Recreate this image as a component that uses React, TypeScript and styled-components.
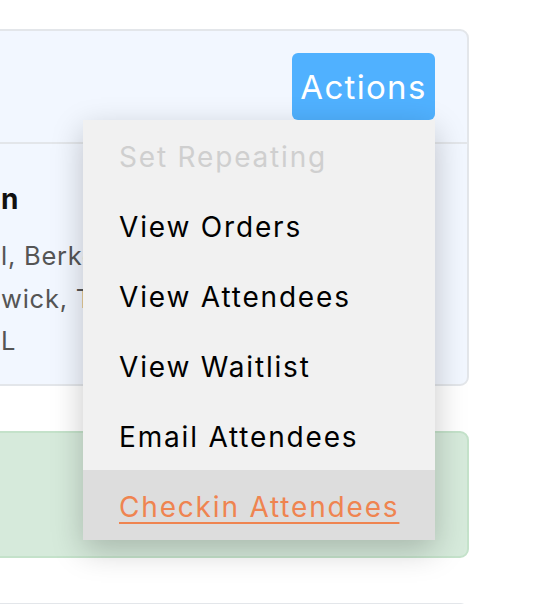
import React from "react";
import styled, { createGlobalStyle } from "styled-components";

const Global = createGlobalStyle`
  html, body { margin: 0; padding: 0; background: #ffffff; overflow: hidden; }
  body { font-family: Inter, "Noto Sans", sans-serif; width: 542px; height: 604px; }
`;

const Viewport = styled.div`
  width: 542px;
  height: 604px;
  overflow: hidden;
`;

const Page = styled.div`
  width: 509px;
  margin-left: -40px;
  padding-top: 29px;
  display: flex;
  flex-direction: column;
  gap: 45px;
`;

const Card = styled.section`
  background: #f2f7ff;
  border: 2px solid #e3e6ea;
  border-radius: 9px;
  display: flex;
  flex-direction: column;
`;

const CardHeader = styled.div`
  height: 113px;
  padding: 22px 32px 0 0;
  box-sizing: border-box;
  display: flex;
  justify-content: flex-end;
  border-bottom: 2px solid #e3e6ea;
`;

const CardBody = styled.div`
  height: 240px;
  box-sizing: border-box;
  padding: 37px 0 0 39px;
  display: flex;
  flex-direction: column;
`;

const Title = styled.div`
  font-size: 28px;
  font-weight: 700;
  color: #111;
  line-height: 36px;
  margin-bottom: 18px;
`;

const Line = styled.div`
  font-size: 25.5px;
  color: #555;
  line-height: 42.5px;
  letter-spacing: 0.03em;
`;

const ActionsWrap = styled.div`
  position: relative;
  height: 67px;
`;

const ActionsButton = styled.button`
  height: 67px;
  width: 143px;
  border: none;
  border-radius: 6px;
  background: #50b1ff;
  color: #fff;
  font-family: inherit;
  font-size: 33px;
  letter-spacing: 0.04em;
  padding: 0;
  cursor: pointer;
`;

const Menu = styled.ul`
  position: absolute;
  top: 100%;
  right: 0;
  width: 352px;
  margin: 0;
  padding: 0;
  list-style: none;
  background: #f1f1f1;
  box-shadow: 0 10px 30px rgba(0, 0, 0, 0.22);
  z-index: 10;
`;

const MenuItem = styled.li<{ $disabled?: boolean; $active?: boolean }>`
  height: 70px;
  box-sizing: border-box;
  display: flex;
  align-items: center;
  padding: 4px 0 0 36px;
  font-size: 28px;
  letter-spacing: 0.065em;
  color: ${(p) => (p.$disabled ? "#cfcfcf" : p.$active ? "#ef8450" : "#000")};
  background: ${(p) => (p.$active ? "#dddddd" : "transparent")};
  text-decoration: ${(p) => (p.$active ? "underline" : "none")};
  text-underline-offset: 5px;
  text-decoration-thickness: 2px;
  cursor: ${(p) => (p.$disabled ? "default" : "pointer")};
`;

const Notice = styled.section`
  height: 127px;
  box-sizing: border-box;
  background: #d6eadb;
  border: 2px solid #c4e2ca;
  border-radius: 9px;
`;

const NextCard = styled.section`
  height: 40px;
  background: #f2f7ff;
  border: 2px solid #e3e6ea;
  border-radius: 9px;
`;

const items = [
  "Set Repeating",
  "View Orders",
  "View Attendees",
  "View Waitlist",
  "Email Attendees",
  "Checkin Attendees",
];

export default function App() {
  return (
    <>
      <Global />
      <Viewport>
        <Page>
          <Card>
            <CardHeader>
              <ActionsWrap>
                <ActionsButton>Actions</ActionsButton>
                <Menu>
                  {items.map((it, i) => (
                    <MenuItem key={it} $disabled={i === 0} $active={i === items.length - 1}>
                      {it}
                    </MenuItem>
                  ))}
                </Menu>
              </ActionsWrap>
            </CardHeader>
            <CardBody>
              <Title>n</Title>
              <Line>l, Berkeley Square</Line>
              <Line>wick, TD15</Line>
              <Line>L</Line>
            </CardBody>
          </Card>
          <Notice />
          <NextCard />
        </Page>
      </Viewport>
    </>
  );
}
